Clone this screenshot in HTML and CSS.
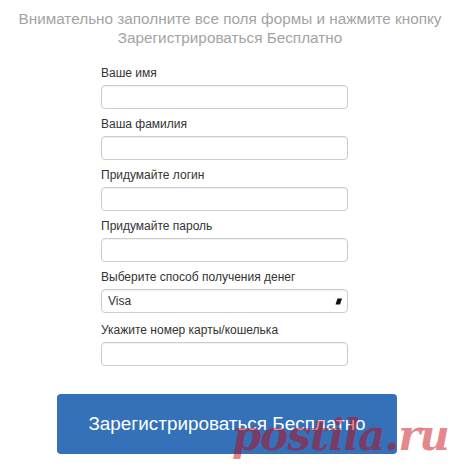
FILE: index.html
```html
<!DOCTYPE html>
<html lang="ru">
<head>
<meta charset="utf-8">
<title>Регистрация</title>
<link rel="stylesheet" href="styles.css">
</head>
<body>
<div class="page">
  <p class="intro">Внимательно заполните все поля формы и нажмите кнопку<br>Зарегистрироваться Бесплатно</p>
  <form class="form">
    <div class="group">
      <label class="label">Ваше имя</label>
      <input class="field" type="text">
    </div>
    <div class="group">
      <label class="label">Ваша фамилия</label>
      <input class="field" type="text">
    </div>
    <div class="group">
      <label class="label">Придумайте логин</label>
      <input class="field" type="text">
    </div>
    <div class="group">
      <label class="label">Придумайте пароль</label>
      <input class="field" type="password">
    </div>
    <div class="group group-select">
      <label class="label">Выберите способ получения денег</label>
      <div class="field select">
        <span class="select-value">Visa</span>
        <svg class="select-arrow" width="7" height="7" viewBox="0 0 7 7"><path d="M2.5 0.5 L7 0.5 L5 6.5 L0.5 6.5 Z" fill="#111"/></svg>
      </div>
    </div>
    <div class="group">
      <label class="label">Укажите номер карты/кошелька</label>
      <input class="field" type="text">
    </div>
  </form>
  <div class="actions">
    <button class="submit" type="button">Зарегистрироваться Бесплатно</button>
  </div>
  <div class="watermark">postila.ru</div>
</div>
</body>
</html>
```
FILE: styles.css
```css
html, body {
  margin: 0;
  padding: 0;
  background: #ffffff;
}
.page {
  position: relative;
  width: 460px;
  height: 474px;
  overflow: hidden;
  font-family: "Liberation Sans", Arial, sans-serif;
}
.intro {
  margin: 0;
  padding-top: 9px;
  text-align: center;
  font-size: 15.3px;
  line-height: 19px;
  color: #a3a3a3;
}
.form {
  width: 247px;
  margin: 18px 0 0 101px;
}
.group {
  margin-bottom: 7px;
}
.group-select {
  margin-bottom: 9px;
}
.label {
  display: block;
  font-size: 12px;
  line-height: 16px;
  color: #333333;
  margin-bottom: 4px;
}
.field {
  display: block;
  box-sizing: border-box;
  width: 247px;
  height: 24px;
  margin: 0;
  padding: 0 6px;
  border: 1px solid #cccccc;
  border-radius: 4px;
  background: #ffffff;
  box-shadow: inset 0 1px 1px rgba(0,0,0,0.06);
  font-family: "Liberation Sans", Arial, sans-serif;
  font-size: 12px;
  outline: none;
}
.select {
  display: flex;
  align-items: center;
  justify-content: space-between;
  color: #333333;
  padding-right: 5px;
}
.select-value {
  font-size: 12px;
}
.select-arrow {
  display: block;
}
.actions {
  padding: 21px 0 0 57px;
}
.submit {
  display: block;
  width: 340px;
  height: 60px;
  border: 0;
  border-radius: 4px;
  background: #3471b8;
  color: #ffffff;
  font-family: "Liberation Sans", Arial, sans-serif;
  font-size: 18.9px;
  padding: 0;
  text-align: center;
}
.watermark {
  position: absolute;
  left: 232px;
  top: 408px;
  font-family: "DejaVu Serif", "Liberation Serif", serif;
  font-weight: bold;
  font-style: italic;
  font-size: 42px;
  line-height: 56px;
  color: rgba(200, 0, 8, 0.48);
  letter-spacing: -1px;
  white-space: nowrap;
}
```
